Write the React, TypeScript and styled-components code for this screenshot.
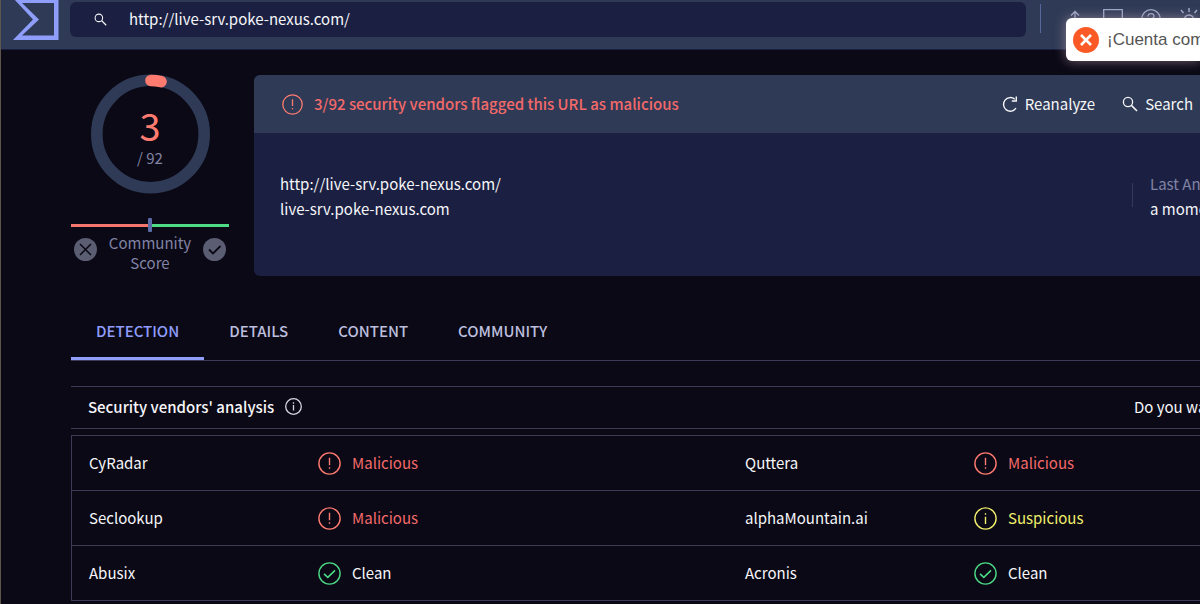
import React from 'react';
import styled, { createGlobalStyle, css } from 'styled-components';

const color = {
  page: '#0b0916',
  bar: '#2f3b56',
  panel: '#1b2042',
  line: '#3b3b56',
  accent: '#8f9dfb',
  danger: '#ff7b70',
  dangerText: '#f4696a',
  warn: '#f0ee6a',
  ok: '#4cd884',
  muted: '#8183a4',
  text: '#f6f6f9',
};

type Status = 'malicious' | 'suspicious' | 'clean';

const Global = createGlobalStyle`
  *, *::before, *::after { box-sizing: border-box; }
  html { background: ${color.page}; }
  body {
    margin: 0;
    background: ${color.page};
    color: ${color.text};
    font: 15px/20px "Noto Sans CJK SC", "Noto Sans", sans-serif;
    overflow: hidden;
  }
  button, input { font: inherit; color: inherit; }
  button { background: none; border: 0; padding: 0; }
  svg { display: block; flex: none; }
`;

const Page = styled.div`
  border-left: 1px solid #5e564e;
  min-height: 100vh;
  overflow: hidden;
`;

const TopBar = styled.header`
  display: flex;
  align-items: flex-start;
  height: 50px;
  background: ${color.bar};
  border-bottom: 1px solid #1b2042;
`;

const Logo = styled.a`
  display: block;
  padding-left: 12px;
  width: 69px;
`;

const SearchForm = styled.form`
  display: flex;
  align-items: center;
  flex: 1;
  height: 35px;
  margin-top: 2px;
  padding: 0 24px;
  gap: 22px;
  background: ${color.panel};
  border-radius: 6px;
`;

const SearchInput = styled.input`
  flex: 1;
  min-width: 0;
  height: 28px;
  padding: 0 0 2px;
  background: transparent;
  border: 0;
  outline: 0;
`;

const Actions = styled.nav`
  display: flex;
  align-items: center;
  gap: 18px;
  margin-left: 14px;
  padding-left: 24px;
  height: 29px;
  margin-top: 4px;
  padding-right: 1px;
  border-left: 1px solid #5667a0;
  color: #9ba6c6;
`;

const ActionButton = styled.button`
  width: 20px;
  height: 20px;
`;

const Toast = styled.div`
  position: absolute;
  top: 18px;
  right: 0;
  display: flex;
  align-items: center;
  gap: 8px;
  width: 134px;
  height: 43px;
  padding-left: 7px;
  border-radius: 6px 0 0 6px;
  background: #fff;
  box-shadow: 0 0 12px rgba(205, 170, 190, 0.55);
  color: #555;
  font: 17px/24px "Liberation Sans", Arial, sans-serif;
  white-space: nowrap;
  overflow: hidden;
`;

const Main = styled.main`
  padding: 25px 0 0 70px;
`;

const Summary = styled.section`
  display: flex;
  gap: 25px;
`;

const Score = styled.aside`
  width: 158px;
  flex: none;
`;

const Gauge = styled.div`
  display: grid;
  place-items: center;
  margin-top: -1px;
  > * { grid-area: 1 / 1; }
`;

const GaugeLabel = styled.div`
  display: flex;
  flex-direction: column;
  align-items: center;
  gap: 3px;
  padding-top: 5px;
  color: ${color.muted};
`;

const Detected = styled.strong`
  color: ${color.danger};
  font-size: 38px;
  font-weight: 400;
  line-height: 40px;
`;

const Balance = styled.div`
  display: flex;
  align-items: center;
  height: 14px;
  margin-top: 24px;
`;

const Side = styled.span<{ $bg: string }>`
  flex: 1;
  height: 3px;
  background: ${p => p.$bg};
`;

const Marker = styled.span`
  width: 4px;
  height: 14px;
  border-radius: 1px;
  background: #5b6ba6;
`;

const Votes = styled.div`
  display: flex;
  justify-content: space-between;
  align-items: flex-start;
  padding: 1px 3px 0;
  color: ${color.muted};
  text-align: center;
`;

const VoteButton = styled.button`
  margin-top: 5px;
`;

const CommunityLabel = styled.p`
  margin: 0;
  width: 90px;
`;

const Card = styled.article`
  flex: 1;
  min-width: 0;
  border-radius: 6px 0 0 6px;
  overflow: hidden;
  background: ${color.panel};
`;

const CardHeader = styled.div`
  display: flex;
  align-items: center;
  height: 58px;
  padding: 0 7px 0 28px;
  background: ${color.bar};
`;

const Verdict = styled.div`
  display: flex;
  align-items: center;
  gap: 11px;
  flex: 1;
  color: ${color.dangerText};
  font-weight: 500;
`;

const CardAction = styled.button`
  display: flex;
  align-items: center;
  gap: 7px;
  margin-left: 27px;
`;

const CardBody = styled.div`
  display: flex;
  align-items: flex-start;
  height: 143px;
  padding: 38px 0 0 26px;
  line-height: 25px;
`;

const Target = styled.div`
  flex: 1;
`;

const Divider = styled.span`
  width: 1px;
  height: 24px;
  margin: 12px 17px 0 0;
  background: #33385c;
`;

const Meta = styled.dl`
  width: 50px;
  margin: 0;
  white-space: nowrap;
  dt { color: ${color.muted}; }
  dd { margin: 0; }
`;

const Tabs = styled.nav`
  display: flex;
  height: 59px;
  margin-top: 26px;
  border-bottom: 1px solid ${color.line};
`;

const Tab = styled.a<{ $active?: boolean }>`
  display: flex;
  align-items: center;
  padding: 2px 25px 0;
  border-bottom: 3px solid transparent;
  color: #bcbede;
  font-weight: 500;
  text-decoration: none;
  ${p => p.$active && css`
    color: ${color.accent};
    border-color: ${color.accent};
  `}
`;

const AnalysisHeader = styled.div`
  display: flex;
  align-items: center;
  justify-content: space-between;
  height: 43px;
  margin-top: 25px;
  padding: 0 0 2px 17px;
  border: solid ${color.line};
  border-width: 1px 0;
`;

const Heading = styled.h2`
  display: flex;
  align-items: center;
  gap: 11px;
  margin: 0;
  font-size: 15px;
  font-weight: 500;
`;

const Question = styled.span`
  width: 66px;
  white-space: nowrap;
`;

const Vendors = styled.table`
  width: 100%;
  margin-top: 6px;
  table-layout: fixed;
  border-spacing: 0;
  border: solid ${color.line};
  border-width: 1px 0 0 1px;
`;

const NameCol = styled.col`
  width: 246px;
`;

const ResultCol = styled.col`
  width: 226px;
`;

const Vendor = styled.th`
  height: 55px;
  padding: 0 0 0 17px;
  border-bottom: 1px solid ${color.line};
  font-weight: 400;
  text-align: left;
`;

const ResultCell = styled.td`
  padding: 0;
  border-bottom: 1px solid ${color.line};
`;

const tone: Record<Status, string> = {
  malicious: color.dangerText,
  suspicious: color.warn,
  clean: color.text,
};

const Result = styled.span<{ $status: Status }>`
  display: flex;
  align-items: center;
  gap: 11px;
  color: ${p => tone[p.$status]};
`;

const Magnifier = ({ size }: { size: number }) => (
  <svg width={size} height={size} viewBox="0 0 16 16" fill="none" stroke="currentColor" strokeWidth="1.3">
    <circle cx="6" cy="6" r="4.6" />
    <path d="M9.4 9.4 15 15" strokeWidth="1.6" />
  </svg>
);

const StatusIcon = ({ status, size = 23 }: { status: Status; size?: number }) => (
  <svg
    width={size}
    height={size}
    viewBox="0 0 23 23"
    fill="none"
    stroke={status === 'clean' ? color.ok : status === 'suspicious' ? color.warn : color.danger}
    strokeWidth="1.4"
  >
    <circle cx="11.5" cy="11.5" r="10.6" />
    {status === 'malicious' && <path d="M11.5 5.8v7.4M11.5 15.2v1.6" />}
    {status === 'suspicious' && <path d="M11.5 6.2v1.6M11.5 9.8v7.2" />}
    {status === 'clean' && <path d="m6 11.8 3.8 3.6 7.2-7" strokeWidth="1.6" />}
  </svg>
);

const labels: Record<Status, string> = {
  malicious: 'Malicious',
  suspicious: 'Suspicious',
  clean: 'Clean',
};

const rows: [string, Status, string, Status][] = [
  ['CyRadar', 'malicious', 'Quttera', 'malicious'],
  ['Seclookup', 'malicious', 'alphaMountain.ai', 'suspicious'],
  ['Abusix', 'clean', 'Acronis', 'clean'],
];

const VendorResult = ({ name, status }: { name: string; status: Status }) => (
  <>
    <Vendor scope="row">{name}</Vendor>
    <ResultCell>
      <Result $status={status}>
        <StatusIcon status={status} />
        {labels[status]}
      </Result>
    </ResultCell>
  </>
);

export default function App() {
  return (
    <Page>
      <Global />
      <TopBar>
        <Logo href="#" aria-label="Home">
          <svg width="46" height="40" viewBox="0 0 46 40" fill={color.accent} fillRule="evenodd">
            <path d="M1-1H45.500V40H0L20 19.500ZM9 3 26 19.500 9 35.500H41V3Z" />
          </svg>
        </Logo>
        <SearchForm role="search">
          <Magnifier size={13} />
          <SearchInput aria-label="Search" defaultValue="http://live-srv.poke-nexus.com/" />
        </SearchForm>
        <Actions aria-label="Tools">
          <ActionButton aria-label="Upload">
            <svg width="20" height="20" viewBox="0 0 20 20" fill="none" stroke="currentColor" strokeWidth="1.3">
              <path d="M10 14V3M6 6.500 10 2.500l4 4M2 13v5h16v-5" />
            </svg>
          </ActionButton>
          <ActionButton aria-label="Comments">
            <svg width="20" height="20" viewBox="0 0 20 20" fill="none" stroke="currentColor" strokeWidth="1.3">
              <path d="M.7.700h18.600v14H6l-5.300 4Z" />
            </svg>
          </ActionButton>
          <ActionButton aria-label="Help">
            <svg width="20" height="20" viewBox="0 0 20 20" fill="none" stroke="currentColor" strokeWidth="1.3">
              <circle cx="10" cy="10" r="9.300" />
              <path d="M7 7.500c0-4 6-3.500 6-.2 0 2.200-3 2.200-3 4.700M10 14v1.500" />
            </svg>
          </ActionButton>
          <ActionButton aria-label="Theme">
            <svg width="20" height="20" viewBox="0 0 20 20" fill="none" stroke="currentColor" strokeWidth="1.5" overflow="visible">
              <circle cx="10" cy="10.500" r="4.500" />
              <path d="M10-1v4M2 1 4.500 4M18 1 15.500 4M0 10.500h3M17 10.500h3" />
            </svg>
          </ActionButton>
        </Actions>
      </TopBar>

      <Main>
        <Summary>
          <Score>
            <Gauge>
              <svg width="120" height="120" viewBox="0 0 120 120" fill="none" strokeWidth="11.600">
                <circle cx="60.500" cy="60" r="53.700" stroke={color.bar} />
                <path d="M61 6.500A54 54 0 0 1 71 7.600" stroke={color.danger} strokeLinecap="round" />
              </svg>
              <GaugeLabel>
                <Detected>3</Detected>
                <span>/ 92</span>
              </GaugeLabel>
            </Gauge>
            <Balance>
              <Side $bg="#f5766c" />
              <Marker />
              <Side $bg="#4fdc87" />
            </Balance>
            <Votes>
              <VoteButton aria-label="Vote malicious">
                <svg width="23" height="23" viewBox="0 0 23 23" fill="none" stroke={color.page} strokeWidth="1.6">
                  <circle cx="11.5" cy="11.5" r="11.5" fill="#5b5d72" stroke="none" />
                  <path d="m6 6 11 11M17 6 6 17" />
                </svg>
              </VoteButton>
              <CommunityLabel>Community Score</CommunityLabel>
              <VoteButton aria-label="Vote harmless">
                <svg width="23" height="23" viewBox="0 0 23 23" fill="none" stroke={color.page} strokeWidth="1.8">
                  <circle cx="11.5" cy="11.5" r="11.5" fill="#5b5d72" stroke="none" />
                  <path d="m6 11.500 4 4 7.500-7.500" />
                </svg>
              </VoteButton>
            </Votes>
          </Score>

          <Card>
            <CardHeader>
              <Verdict>
                <StatusIcon status="malicious" size={21} />
                3/92 security vendors flagged this URL as malicious
              </Verdict>
              <CardAction>
                <svg width="16" height="16" viewBox="0 0 16 16" fill="none" stroke="currentColor" strokeWidth="1.4">
                  <path d="M14 12.200A6.800 6.800 0 1 1 12.800 3.200M14.300.500v4.500H9.800" />
                </svg>
                Reanalyze
              </CardAction>
              <CardAction>
                <Magnifier size={16} />
                Search
              </CardAction>
            </CardHeader>
            <CardBody>
              <Target>
                <div>http://live-srv.poke-nexus.com/</div>
                <div>live-srv.poke-nexus.com</div>
              </Target>
              <Divider />
              <Meta>
                <dt>Last An</dt>
                <dd>a mome</dd>
              </Meta>
            </CardBody>
          </Card>
        </Summary>

        <Tabs aria-label="Report">
          <Tab href="#detection" $active>DETECTION</Tab>
          <Tab href="#details">DETAILS</Tab>
          <Tab href="#content">CONTENT</Tab>
          <Tab href="#community">COMMUNITY</Tab>
        </Tabs>

        <AnalysisHeader>
          <Heading>
            Security vendors' analysis
            <svg width="17" height="17" viewBox="0 0 17 17" fill="none" stroke="#d5d5de" strokeWidth="1.3">
              <circle cx="8.500" cy="8.500" r="7.800" />
              <path d="M8.500 4.200v1.500M8.500 7v5.500" />
            </svg>
          </Heading>
          <Question>Do you wa</Question>
        </AnalysisHeader>

        <Vendors>
          <colgroup>
            <NameCol />
            <col />
            <NameCol />
            <ResultCol />
          </colgroup>
          <tbody>
            {rows.map(([left, leftStatus, right, rightStatus]) => (
              <tr key={left}>
                <VendorResult name={left} status={leftStatus} />
                <VendorResult name={right} status={rightStatus} />
              </tr>
            ))}
          </tbody>
        </Vendors>
      </Main>

      <Toast role="alert">
        <svg width="26" height="26" viewBox="0 0 26 26" fill="none" stroke="#fff" strokeWidth="2.600">
          <circle cx="13" cy="13" r="13" fill="#fb5a26" stroke="none" />
          <path d="m8 8 10 10M18 8 8 18" />
        </svg>
        ¡Cuenta com
      </Toast>
    </Page>
  );
}
